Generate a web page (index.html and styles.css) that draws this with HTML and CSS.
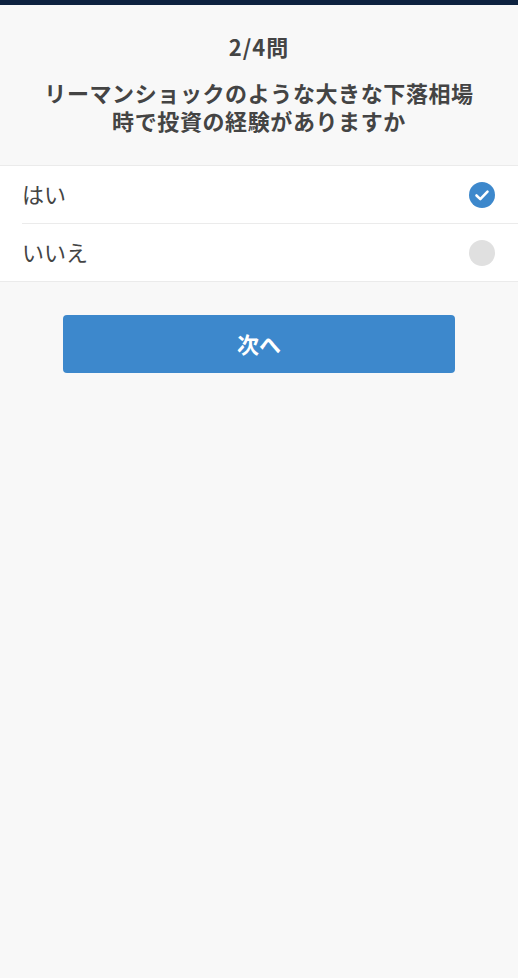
FILE: index.html
```html
<!DOCTYPE html>
<html lang="ja">
<head>
    <meta charset="UTF-8">
    <meta name="viewport" content="width=device-width, initial-scale=1.0">
    <title>質問</title>
    <link rel="stylesheet" href="styles.css">
</head>
<body>
    <div class="top-bar"></div>
    <div class="question">
        <div class="count">2/4問</div>
        <div class="text">リーマンショックのような大きな下落相場<br>時で投資の経験がありますか</div>
    </div>
    <ul class="options">
        <li class="option">
            <span class="label">はい</span>
            <span class="mark checked">
                <svg width="26" height="26" viewBox="0 0 26 26"><circle cx="13" cy="13" r="13" fill="#3d88cc"/><path d="M7.5 13.5l3.8 3.6 7.2-7.4" fill="none" stroke="#fff" stroke-width="2.6" stroke-linecap="round" stroke-linejoin="round"/></svg>
            </span>
        </li>
        <li class="option">
            <span class="label">いいえ</span>
            <span class="mark"></span>
        </li>
    </ul>
    <div class="actions">
        <button class="next-button">次へ</button>
    </div>
</body>
</html>
```

FILE: styles.css
```css
body {
    font-family: "Noto Sans CJK JP", "Noto Sans", sans-serif;
    margin: 0;
    padding: 0;
    background-color: #f8f8f8;
    color: #444;
}
.top-bar {
    height: 5px;
    background-color: #0d2240;
}
.question {
    text-align: center;
    padding-top: 27px;
    padding-bottom: 31px;
}
.count {
    font-size: 22px;
    font-weight: bold;
    line-height: 28px;
    letter-spacing: 1px;
}
.text {
    font-size: 22px;
    font-weight: bold;
    line-height: 28px;
    letter-spacing: 0.6px;
    margin-top: 18px;
}
.options {
    list-style: none;
    margin: 0;
    padding: 0 0 0 22px;
    background: white;
    border-top: 1px solid #ebebeb;
    border-bottom: 1px solid #ebebeb;
}
.option {
    display: flex;
    align-items: center;
    justify-content: space-between;
    height: 57px;
    padding-right: 23px;
    font-size: 22px;
}
.option + .option {
    border-top: 1px solid #ebebeb;
}
.label {
    padding-bottom: 4px;
}
.mark {
    width: 26px;
    height: 26px;
    border-radius: 50%;
    background-color: #e0e0e0;
}
.mark.checked {
    background: none;
}
.mark svg {
    display: block;
}
.actions {
    display: flex;
    justify-content: center;
    padding-top: 33px;
}
.next-button {
    width: 392px;
    height: 58px;
    padding-bottom: 3px;
    background-color: #3d88cc;
    color: white;
    border: none;
    border-radius: 4px;
    font-family: inherit;
    font-size: 22px;
    font-weight: bold;
    cursor: pointer;
}
```
